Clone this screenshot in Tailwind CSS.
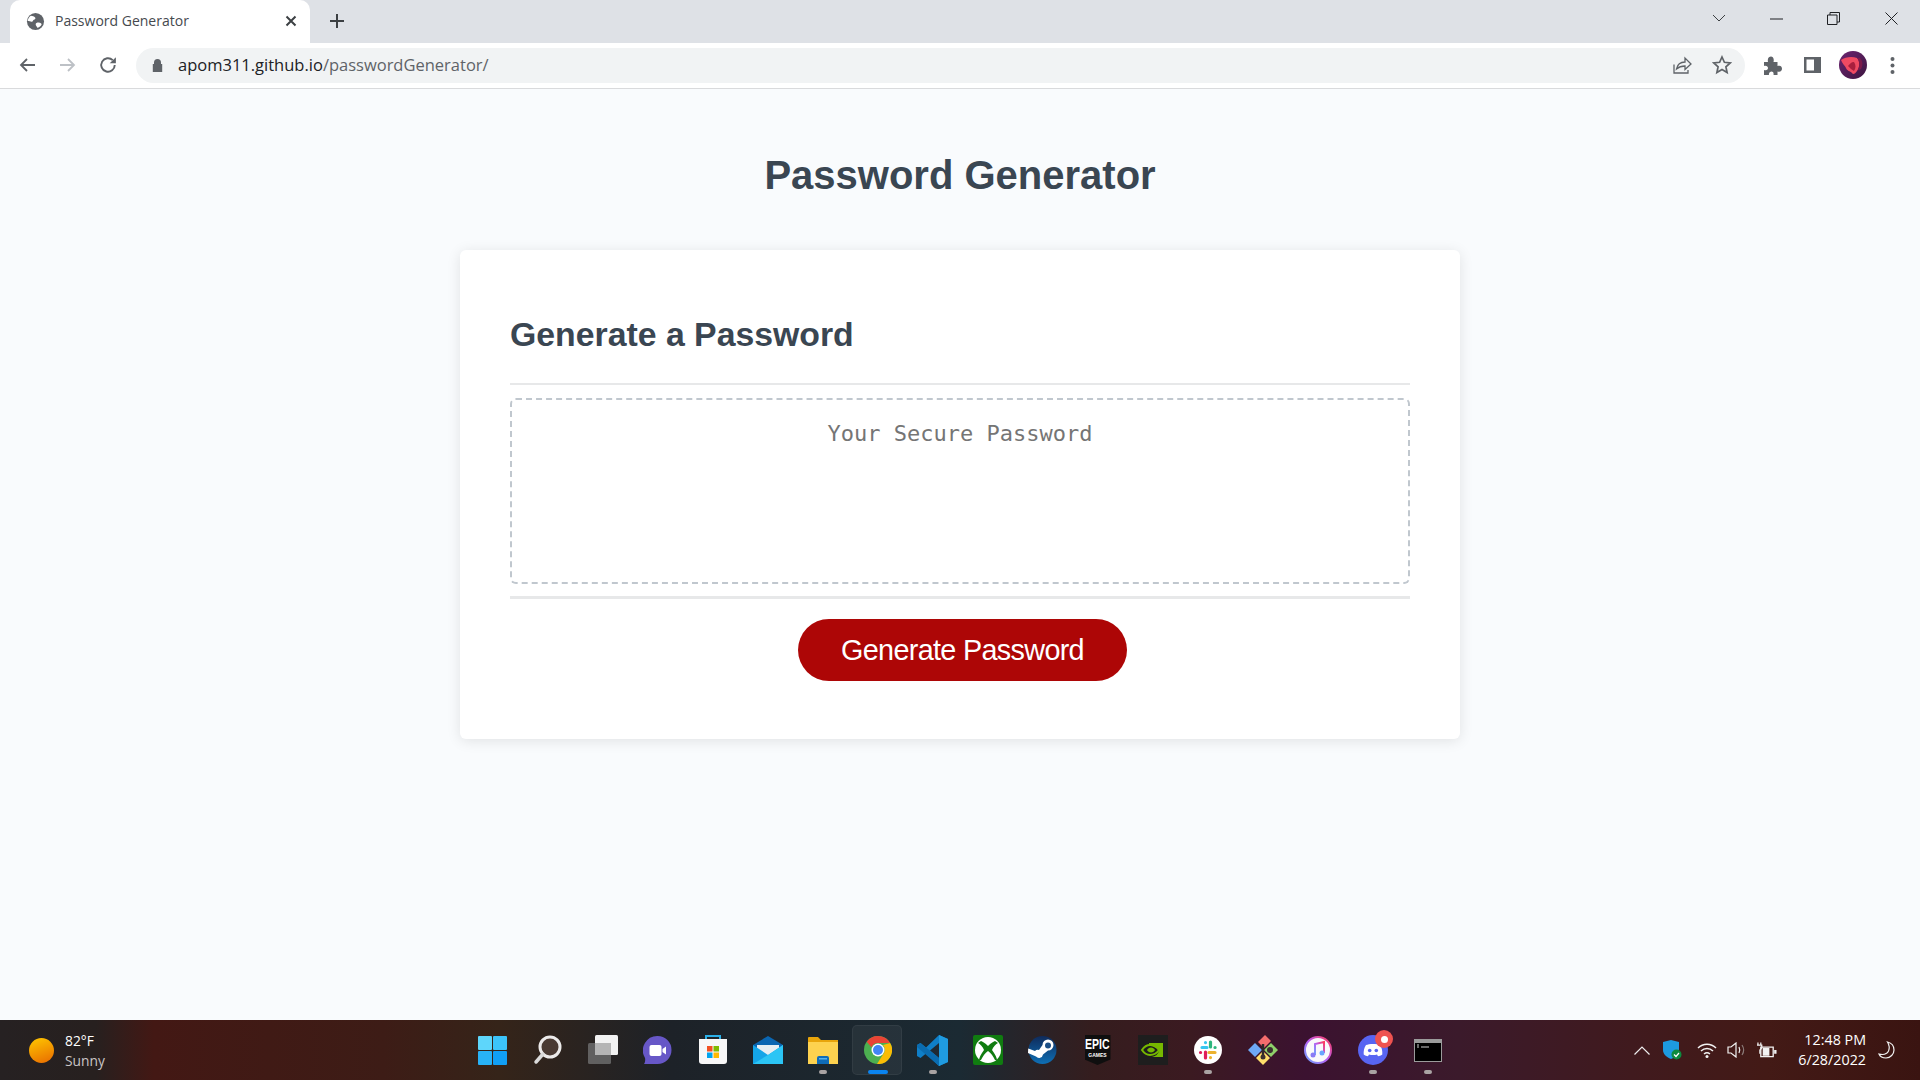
<!doctype html>
<html lang="en">
<head>
<meta charset="utf-8">
<title>Password Generator</title>
<script src="https://cdn.jsdelivr.net/npm/@tailwindcss/browser@4"></script>
</head>
<body class="m-0 w-[1920px] h-[1080px] overflow-hidden flex flex-col bg-[#f9fbfd] font-['Liberation_Sans',Arial,sans-serif]">
<!-- tab strip -->
<header class="h-[43px] shrink-0 bg-[#dee1e6] flex items-center pl-[10px] font-['Open_Sans',sans-serif]">
  <div class="w-[300px] h-[43px] bg-white rounded-t-[10px] flex items-center pl-[16px] pr-[13px] pb-[1px]">
    <svg class="w-[19px] h-[19px] shrink-0" viewBox="0 0 20 20"><circle cx="10" cy="10" r="9" fill="#5f6368"/><path d="M5 4c2 .2 3.600.6 4.600 1.800 1 1.200-.4 2-1.400 2.400-1 .5-.6 1.800-1.800 2C5 10.500 3.500 9.500 1.800 9.500 2 7.500 3.200 5.300 5 4zM11 11.500c1.600-.8 3.800-.6 5 .6.500.5.500 1 .2 1.500-1 1.500-2.500 2.600-4.300 3-.5-1.500-1.700-2.300-1.700-3.500 0-.7.200-1.300.8-1.600z" fill="#fff"/></svg>
    <span class="ml-[10px] text-[14px] leading-none text-[#45494e] flex-1">Password Generator</span>
    <svg class="w-[12px] h-[12px] shrink-0" viewBox="0 0 12 12"><path d="M1.500 1.500l9 9M10.500 1.500l-9 9" stroke="#3c4043" stroke-width="2"/></svg>
  </div>
  <svg class="ml-[19px] mb-[1px] w-[16px] h-[16px]" viewBox="0 0 16 16"><path d="M8 1v14M1 8h14" stroke="#3c4043" stroke-width="2"/></svg>
  <div class="ml-auto self-start flex items-center h-[37px]">
    <svg class="w-[14px] h-[9px] mr-[44px]" viewBox="0 0 14 9"><path d="M1 1l6 6 6-6" fill="none" stroke="#3c4043" stroke-width="1"/></svg>
    <svg class="w-[13px] h-[2px] mr-[44px]" viewBox="0 0 13 2"><path d="M0 1h13" stroke="#1f2124" stroke-width="1"/></svg>
    <svg class="w-[13px] h-[13px] mr-[45px]" viewBox="0 0 13 13"><path d="M.5 3h9.500v9.500H.5zM3 3V.5h9.500V10H10" fill="none" stroke="#1f2124" stroke-width="1"/></svg>
    <svg class="w-[13px] h-[13px] mr-[22px]" viewBox="0 0 13 13"><path d="M.5.500l12 12M12.500.500l-12 12" stroke="#1f2124" stroke-width="1"/></svg>
  </div>
</header>
<!-- toolbar -->
<nav class="h-[46px] shrink-0 bg-white border-b border-[#d9dadc] flex items-center pb-[1px] font-['Open_Sans',sans-serif]">
  <div class="w-[136px] h-[36px] flex items-center shrink-0">
    <svg class="ml-[19px] w-[16px] h-[16px]" viewBox="0 0 16 16"><path d="M16 8H2M8 2L2 8l6 6" fill="none" stroke="#5f6368" stroke-width="1.800"/></svg>
    <svg class="ml-[25px] w-[16px] h-[16px]" viewBox="0 0 16 16"><path d="M0 8h14M8 2l6 6-6 6" fill="none" stroke="#bdc1c6" stroke-width="1.800"/></svg>
    <svg class="ml-[23px] w-[18px] h-[18px]" viewBox="0 0 16 16"><path d="M14 8a6 6 0 1 1-1.800-4.300" fill="none" stroke="#5f6368" stroke-width="1.700"/><path d="M15 1v5.500H9.500z" fill="#5f6368"/></svg>
  </div>
  <div class="w-[1609px] h-[35px] bg-[#f1f3f4] rounded-full flex items-center shrink-0">
    <svg class="ml-[16px] w-[11px] h-[13px]" viewBox="0 0 11 13"><path d="M2 5V3.500a3.500 3.500 0 0 1 7 0V5h1.200v8H.8V5z" fill="#5f6368"/></svg>
    <p class="ml-[15px] text-[16.500px] leading-none text-[#202124] pt-[1px]">apom311.github.io<span class="text-[#5f6368]">/passwordGenerator/</span></p>
    <svg class="ml-auto w-[20px] h-[20px]" viewBox="0 0 20 20"><path d="M2 9.500V18h14v-3" fill="none" stroke="#5f6368" stroke-width="1.300"/><path d="M4.500 14c.8-4 4-7 8.500-7V3l6 6-6 5.500V11c-3.500 0-6 .8-8.500 3z" fill="#f1f3f4" stroke="#5f6368" stroke-width="1.300"/></svg>
    <svg class="ml-[20px] mr-[13px] w-[20px] h-[20px]" viewBox="0 0 20 20"><path d="M10 2l2.400 5.300 5.800.6-4.300 3.900 1.200 5.700-5.100-2.900-5.100 2.900 1.200-5.700L1.800 7.900l5.800-.6z" fill="none" stroke="#5f6368" stroke-width="1.700"/></svg>
  </div>
  <svg class="ml-[18px] w-[19px] h-[19px]" viewBox="0 0 19 19"><path d="M1 6h4c-1-4 1.500-5.500 3-5.500S11.500 2 10.500 6h4v4c3.500-1 4.500 1 4.500 2.800S17.500 16.500 14.500 15.500V19h-4c.5-2.500-.8-3.500-2-3.500S5.500 16.500 6 19H1v-5c3 .8 4-.6 4-2s-1.500-2.700-4-2z" fill="#5f6368"/></svg>
  <svg class="ml-[22px] w-[17px] h-[18px]" viewBox="0 0 17 18"><path d="M0 1h17v16H0z" fill="#5f6368"/><path d="M2.500 3.500h7.500v11H2.500z" fill="#fff"/></svg>
  <svg class="ml-[18px] w-[28px] h-[28px]" viewBox="0 0 28 28"><defs><linearGradient id="av" x1="0" y1="0" x2="1" y2="1"><stop offset="0" stop-color="#6b2470"/><stop offset="1" stop-color="#3d1540"/></linearGradient></defs><circle cx="14" cy="14" r="14" fill="url(#av)"/><path d="M2 9c4-3 11-4 16-2 3 3 3 9 0 13-2 3-4 4-5 2-2-2-5-2-6-5-1-2-4-5-5-8z" fill="#ef4a62"/><path d="M9 15c2 2 4 4 6 5 2-3 2-6 0-9-3 0-4 2-6 4z" fill="#a81f3e"/><path d="M18 7c3 3 3 9 0 13l4-2c2-3 2-8-1-11z" fill="#7a1a4a"/></svg>
  <svg class="ml-[23px] w-[5px] h-[19px]" viewBox="0 0 5 19"><g fill="#5f6368"><circle cx="2.500" cy="3" r="2"/><circle cx="2.500" cy="9.500" r="2"/><circle cx="2.500" cy="16" r="2"/></g></svg>
</nav>
<!-- page -->
<main class="flex-1 min-h-0 flex flex-col items-center text-[#3a4652]">
  <h1 class="mt-[63px] h-[46px] text-[40px] leading-[46px] font-bold">Password Generator</h1>
  <section class="mt-[52px] w-[1000px] h-[489px] bg-white rounded-[6px] shadow-[0_2px_14px_rgba(0,0,0,0.1)] px-[50px] pt-[66px] flex flex-col">
    <h2 class="h-[37px] text-[33.800px] leading-[37px] font-bold">Generate a Password</h2>
    <div class="mt-[30px] h-[2px] bg-[#e7e8e9]"></div>
    <div class="mt-[13px] h-[186px] border-2 border-dashed border-[#c0c7ce] rounded-[6px] pt-[21px] text-center font-['DejaVu_Sans_Mono',monospace] text-[22px] leading-[26px] text-[#757575]">Your Secure Password</div>
    <div class="mt-[12px] h-[3px] bg-[#e7e8e9]"></div>
    <div class="mt-[20px] flex justify-center pl-[5px]">
      <button class="w-[329px] h-[62px] rounded-[31px] bg-[#ad0606] text-white text-[28.800px] tracking-[-0.680px] leading-none">Generate Password</button>
    </div>
  </section>
</main>
<!-- taskbar -->
<footer class="h-[60px] shrink-0 grid grid-cols-[1fr_990px_1fr] items-center text-white font-['Open_Sans',sans-serif] bg-[linear-gradient(90deg,#262122_0%,#27201f_5%,#431814_8%,#3d1c16_20%,#352419_26%,#1d2228_35%,#1b2a33_50%,#351d1e_57%,#3b1a21_62%,#3b1230_68%,#3b1a2b_76%,#401a1e_85%,#431a16_92%,#3a1411_100%)]">
  <div class="flex items-center pl-[29px]">
    <div class="w-[25px] h-[25px] rounded-full bg-[linear-gradient(160deg,#ffc800,#e86a00)]"></div>
    <div class="ml-[11px] pt-[2px] text-[13.800px] leading-[20px]"><p>82°F</p><p class="text-[#c9c5c5]">Sunny</p></div>
  </div>
  <div class="flex items-center h-[60px]">
    <div class="w-[55px] h-[50px] flex items-center justify-center"><svg class="w-[29px] h-[29px]" viewBox="0 0 29 29"><rect width="14" height="14" fill="#5ed6fb" rx="1"/><rect x="15" width="14" height="14" fill="#3cc4fa" rx="1"/><rect y="15" width="14" height="14" fill="#28b2f7" rx="1"/><rect x="15" y="15" width="14" height="14" fill="#119ff5" rx="1"/></svg></div>
    <div class="w-[55px] h-[50px] flex items-center justify-center"><svg class="w-[30px] h-[30px]" viewBox="0 0 30 30"><circle cx="17" cy="12" r="10" fill="#4a3a33" stroke="#eceaea" stroke-width="3"/><path d="M10 19l-7 8" stroke="#dadada" stroke-width="3.500" stroke-linecap="round"/></svg></div>
    <div class="w-[55px] h-[50px] flex items-center justify-center"><svg class="w-[30px] h-[30px]" viewBox="0 0 30 30"><rect x="7" width="23" height="20" rx="1.500" fill="#f2f2f2"/><rect y="8" width="23" height="21" rx="1.500" fill="#6b6b6b" fill-opacity=".85"/><rect x="7" y="8" width="16" height="12" fill="#b5b5b5"/></svg></div>
    <div class="w-[55px] h-[50px] flex items-center justify-center"><svg class="w-[29px] h-[29px]" viewBox="0 0 29 29"><path d="M14.500 0a14 14 0 1 1 0 28H1c1-1 1.500-4 1-6A14.500 14.500 0 0 1 14.500 0z" fill="#6757c7"/><rect x="6.500" y="9" width="12" height="11" rx="2" fill="#fff"/><path d="M19.500 13l3.500-2.500v8L19.500 16z" fill="#fff"/></svg></div>
    <div class="w-[55px] h-[50px] flex items-center justify-center"><svg class="w-[30px] h-[30px]" viewBox="0 0 30 30"><path d="M8 5V1h14v4" fill="none" stroke="#2bb0e8" stroke-width="2"/><path d="M1 4h28v22a3 3 0 0 1-3 3H4a3 3 0 0 1-3-3z" fill="#f7f7f7"/><rect x="9" y="11" width="5.500" height="5.500" fill="#f25022"/><rect x="15.500" y="11" width="5.500" height="5.500" fill="#7fba00"/><rect x="9" y="17.500" width="5.500" height="5.500" fill="#00a4ef"/><rect x="15.500" y="17.500" width="5.500" height="5.500" fill="#ffb900"/></svg></div>
    <div class="w-[55px] h-[50px] flex items-center justify-center"><svg class="w-[30px] h-[28px]" viewBox="0 0 30 28"><path d="M0 9l15-9 15 9v19H0z" fill="#0a66b2"/><path d="M4 9h22v9l-11 6-11-6z" fill="#e6eef3"/><path d="M0 9l15 10L30 9v19H0z" fill="#14a5e8"/><path d="M30 9v19H15L0 28l15-9z" fill="#2bc5f5"/></svg></div>
    <div class="w-[55px] h-[50px] flex items-center justify-center relative"><svg class="w-[30px] h-[27px]" viewBox="0 0 30 27"><path d="M0 1a1 1 0 0 1 1-1h9l3 3h17v24H0z" fill="#e8a50b"/><path d="M0 5h30v22H0z" fill="#fdd24f"/><path d="M9 21a2 2 0 0 1 2-2h8a2 2 0 0 1 2 2v6H9z" fill="#0f6cb8"/><rect x="11" y="21" width="8" height="1.500" fill="#57b2ec"/></svg><span class="absolute left-1/2 -translate-x-1/2 bottom-[1px] w-[8px] h-[4px] rounded-full bg-[#a9a3a3]"></span></div>
    <div class="w-[55px] h-[50px] flex items-center justify-center relative"><div class="absolute inset-y-0 left-[2px] right-[3px] bg-white/5 rounded-[5px] border border-white/5"></div><svg class="relative w-[28px] h-[28px]" viewBox="0 0 28 28"><circle cx="14" cy="14" r="14" fill="#4caf50"/><path d="M14 0a14 14 0 0 1 12.100 7H14a7 7 0 0 0-6.500 4.300L2.700 5.700A14 14 0 0 1 14 0z" fill="#ea4335"/><path d="M26.100 7A14 14 0 0 1 13 28l6.300-10A7 7 0 0 0 19 9z" fill="#fbbc05"/><circle cx="14" cy="14" r="6.500" fill="#fff"/><circle cx="14" cy="14" r="5" fill="#4285f4"/></svg><span class="absolute left-1/2 -translate-x-1/2 bottom-[1px] w-[20px] h-[4px] rounded-full bg-[#0a84f0]"></span></div>
    <div class="w-[55px] h-[50px] flex items-center justify-center relative"><svg class="w-[31px] h-[31px]" viewBox="0 0 31 31"><path d="M22 0l9 4v23l-9 4L9 18.500 3.500 23 0 21V10l3.500-2L9 12.500z" fill="#0f7fc8"/><path d="M22 8v15l-9-7.500z" fill="#1f2a33"/><path d="M22 0l9 4v23l-9 4z" fill="#1f9be0"/><path d="M0 10l3.500-2L22 23v8L0 12z" fill="#0a6cb0"/></svg><span class="absolute left-1/2 -translate-x-1/2 bottom-[1px] w-[8px] h-[4px] rounded-full bg-[#a9a3a3]"></span></div>
    <div class="w-[55px] h-[50px] flex items-center justify-center"><svg class="w-[30px] h-[30px]" viewBox="0 0 30 30"><rect width="30" height="30" rx="2" fill="#107c10"/><circle cx="15" cy="15" r="13" fill="#fff"/><path d="M15 11c-3-3-5-4-7-5L5 8c2 1 5 4 6 7-3 4-5 8-5 10h2c2-4 4-7 7-9 3 2 5 5 7 9h2c0-2-2-6-5-10 1-3 4-6 6-7l-3-2c-2 1-4 2-7 5z" fill="#107c10"/></svg></div>
    <div class="w-[55px] h-[50px] flex items-center justify-center"><svg class="w-[29px] h-[28px]" viewBox="0 0 29 28"><defs><linearGradient id="st" x1="0" y1="0" x2="0" y2="1"><stop offset="0" stop-color="#0f2a5a"/><stop offset="1" stop-color="#0e6fb5"/></linearGradient></defs><circle cx="14.500" cy="14" r="14" fill="url(#st)"/><path d="M0 17l8 3.500a4 4 0 0 0 7-2l5-4a5.500 5.500 0 1 0-5.500-5.500l-3.500 5a4 4 0 0 0-4 1L.2 12.500z" fill="#fff"/><circle cx="20" cy="9.500" r="3" fill="#1c4f86"/></svg></div>
    <div class="w-[55px] h-[50px] flex items-center justify-center"><div class="w-[26px] h-[30px] bg-[#0f0f0f] [clip-path:polygon(0_0,100%_0,100%_82%,50%_100%,0_82%)] flex flex-col items-center pt-[2px] text-white font-['Liberation_Sans',sans-serif] font-bold"><span class="text-[14px] leading-[15px] scale-x-75">EPIC</span><span class="text-[5px] leading-[7px]">GAMES</span></div></div>
    <div class="w-[55px] h-[50px] flex items-center justify-center"><svg class="w-[30px] h-[30px]" viewBox="0 0 30 30"><rect width="30" height="30" fill="#1e1e1e"/><path d="M11 8h14v14H14c3-.5 6-2.500 7-6-2-3-5-5-10-5z" fill="#76b900"/><path d="M4 15c2-3 5-5 8-5 4 0 7 2 9 5-2 3-5 5-9 5-3 0-6-2-8-5z" fill="none" stroke="#76b900" stroke-width="2"/><path d="M9 15c1-1.500 2-2.500 4-2.500s3 1 4 2.500c-1 1.500-2 2.500-4 2.500s-3-1-4-2.500z" fill="#76b900"/></svg></div>
    <div class="w-[55px] h-[50px] flex items-center justify-center relative"><svg class="w-[28px] h-[28px]" viewBox="0 0 28 28"><circle cx="14" cy="14" r="14" fill="#fff"/><g stroke-width="3.200" stroke-linecap="round"><path d="M8 11.500h5M11.500 6.500v.1" stroke="#36c5f0"/><path d="M16.500 6v5M21 11.500h.1" stroke="#2eb67d"/><path d="M15 16.500h6M16.500 21.500v.1" stroke="#ecb22e"/><path d="M11.500 16v6M6.500 16.500h.1" stroke="#e01e5a"/></g></svg><span class="absolute left-1/2 -translate-x-1/2 bottom-[1px] w-[8px] h-[4px] rounded-full bg-[#a9a3a3]"></span></div>
    <div class="w-[55px] h-[50px] flex items-center justify-center"><svg class="w-[30px] h-[30px]" viewBox="0 0 30 30"><path d="M17 0l6 6-7 7-6-6z" fill="#f46d6d"/><path d="M16 15l7-7 7 7-7 7z" fill="#8fd16a"/><path d="M15 16l7 7-7 7-7-7z" fill="#ffdf6b"/><path d="M14 15l-7 7-7-7 7-7z" fill="#6ea9f7"/><path d="M15 9v14" stroke="#2e2a2a" stroke-width="2.500"/><circle cx="22" cy="15" r="3" fill="#3b3030"/><circle cx="15" cy="22" r="2.500" fill="#3b3030"/></svg></div>
    <div class="w-[55px] h-[50px] flex items-center justify-center"><svg class="w-[28px] h-[28px]" viewBox="0 0 28 28"><defs><linearGradient id="mu" x1="0" y1="1" x2="1" y2="0"><stop offset="0" stop-color="#6aa6ff"/><stop offset=".5" stop-color="#b85cf0"/><stop offset="1" stop-color="#ff3b5c"/></linearGradient></defs><circle cx="14" cy="14" r="13" fill="#f9f9fb" stroke="url(#mu)" stroke-width="2"/><path d="M11 19V8l9-2v11" fill="none" stroke="url(#mu)" stroke-width="2"/><circle cx="9" cy="19" r="2.500" fill="#8a7bf5"/><circle cx="18" cy="17" r="2.500" fill="#6aa6ff"/></svg></div>
    <div class="w-[55px] h-[50px] flex items-center justify-center relative"><svg class="w-[30px] h-[30px]" viewBox="0 0 30 30"><circle cx="15" cy="15" r="15" fill="#5865f2"/><path d="M8 10c3-1.500 11-1.500 14 0 2 3 2.500 6 2.300 9.500-1.500 1-3 1.500-4.300 1.700l-1-1.700c-2.500.7-5.500.7-8 0l-1 1.700c-1.300-.2-2.800-.7-4.300-1.700C5.500 16 6 13 8 10z" fill="#fff"/><circle cx="11.700" cy="15.500" r="1.800" fill="#5865f2"/><circle cx="18.300" cy="15.500" r="1.800" fill="#5865f2"/></svg><span class="absolute left-[30px] top-[5px] w-[18px] h-[18px] rounded-full bg-[#ef5350] flex items-center justify-center"><span class="w-[7px] h-[7px] rounded-full bg-white"></span></span><span class="absolute left-1/2 -translate-x-1/2 bottom-[1px] w-[8px] h-[4px] rounded-full bg-[#a9a3a3]"></span></div>
    <div class="w-[55px] h-[50px] flex items-center justify-center relative"><svg class="w-[28px] h-[23px]" viewBox="0 0 28 23"><rect width="28" height="23" fill="#9b9b9b"/><rect x="1" y="4" width="26" height="18" fill="#000"/><path d="M3 6h2M3 8h2M7 8h8" stroke="#cfcfcf" stroke-width="1"/></svg><span class="absolute left-1/2 -translate-x-1/2 bottom-[1px] w-[8px] h-[4px] rounded-full bg-[#a9a3a3]"></span></div>
  </div>
  <div class="flex items-center justify-end h-[60px]">
    <svg class="w-[16px] h-[9px]" viewBox="0 0 16 9"><path d="M.5 8.500L8 1l7.500 7.500" fill="none" stroke="#eee" stroke-width="1.200"/></svg>
    <svg class="ml-[13px] w-[19px] h-[20px]" viewBox="0 0 19 20"><path d="M0 2l8-2 8 2v8c0 4-3 7-8 9-5-2-8-5-8-9z" fill="#1d9ae0"/><circle cx="13.500" cy="14.500" r="5" fill="#0d8a3e"/><path d="M11 14.500l2 2 3-3.500" fill="none" stroke="#fff" stroke-width="1.200"/></svg>
    <svg class="ml-[15px] w-[20px] h-[15px]" viewBox="0 0 20 15"><g fill="none" stroke="#f2f2f2" stroke-width="1.500"><path d="M1 5c5-5 13-5 18 0"/><path d="M4 8c3.500-3.500 8.500-3.500 12 0"/><path d="M7 11c1.800-1.500 4.200-1.500 6 0"/></g><circle cx="10" cy="13.500" r="1.500" fill="#f2f2f2"/></svg>
    <svg class="ml-[10px] w-[20px] h-[16px]" viewBox="0 0 20 16"><path d="M1 5h3l5-4v14l-5-4H1z" fill="none" stroke="#f2f2f2" stroke-width="1.200"/><path d="M12 5c1 2 1 4 0 6" fill="none" stroke="#f2f2f2" stroke-width="1.200"/><path d="M15 3c2 3 2 7 0 10" fill="none" stroke="#8a7a78" stroke-width="1.200"/></svg>
    <svg class="ml-[10px] w-[20px] h-[16px]" viewBox="0 0 21 16"><path d="M4 5h13v10H4z" fill="none" stroke="#f2f2f2" stroke-width="1.400"/><path d="M6 6h7v8H6zM18 8h2.500v4H18z" fill="#f2f2f2"/><path d="M1 0v3M4 0v3M0 3h5v3l-2 2v4" fill="none" stroke="#f2f2f2" stroke-width="1.300"/></svg>
    <div class="ml-[20px] w-[69px] text-[14.300px] leading-[20px] text-right whitespace-nowrap"><p>12:48 PM</p><p>6/28/2022</p></div>
    <svg class="ml-[12px] mr-[25px] w-[17px] h-[18px]" viewBox="0 0 17 18"><path d="M9.500 1c4 1 6.500 4 6.500 8s-3.500 8-8 8c-3 0-6-1.500-7-4 4 1 8 0 9.500-3 1-2.500.5-6.500-1-9z" fill="none" stroke="#f2f2f2" stroke-width="1.200"/></svg>
  </div>
</footer>
</body>
</html>
